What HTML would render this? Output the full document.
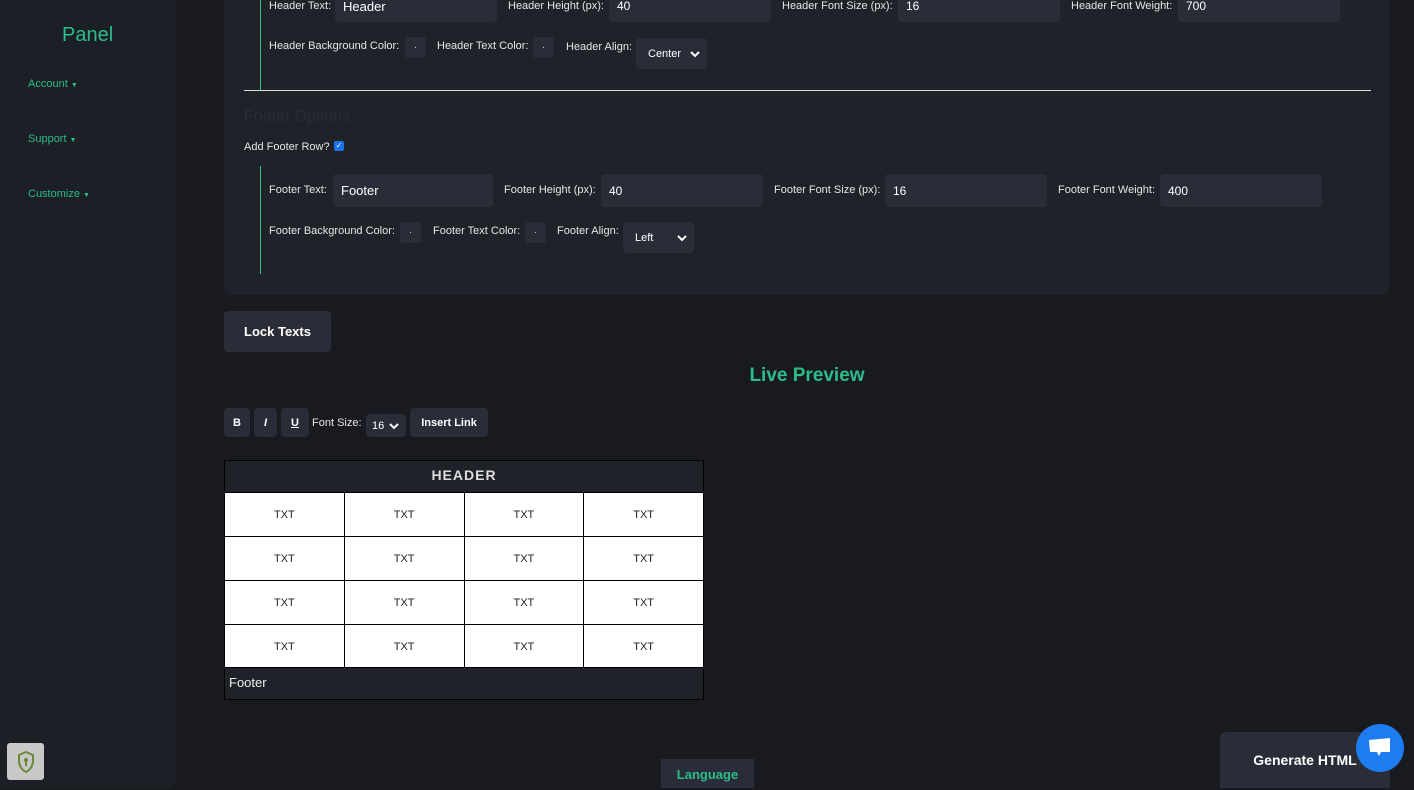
<!DOCTYPE html>
<html><head><meta charset="utf-8"><style>
*{margin:0;padding:0;box-sizing:border-box}
body{width:1414px;height:788px;background:#181a20;font-family:"Liberation Sans",sans-serif;color:#e6e6e6;position:relative;overflow:hidden}
.a{position:absolute}
.side{left:0;top:0;width:176px;height:788px;background:#1c1f26;border-radius:0 0 10px 0}
.g{color:#2bbd8a}
.nav{left:28px;font-size:11px;color:#2bbd8a}
.card{left:224px;top:-20px;width:1166px;height:315px;background:#1f2229;border-radius:8px}
.lbl{font-size:11px;color:#e6e6e6;white-space:nowrap}
.in{background:#2a2d38;border-radius:4px;font-size:12px;color:#fff;padding-left:8px;display:flex;align-items:center}
.sw{background:#2a2d38;border-radius:3px;width:21px;height:21px;font-size:10px;text-align:center;line-height:18px;color:#ccc}
.sel{background:#2a2d38;border-radius:4px;font-size:11px;color:#fff;display:flex;align-items:center;padding-left:12px;position:absolute}
.sel svg{position:absolute;right:7px;top:50%;margin-top:-4px}
.btn{background:#2a2d38;border-radius:4px;color:#fff;font-weight:bold;display:flex;align-items:center;justify-content:center}
table{border-collapse:collapse}
td{border:1px solid #000;background:#fff;color:#222;font-size:11px;text-align:center;width:120px;height:44px}
</style></head><body>
<div class="a side"></div>
<div class="a g" style="left:62px;top:24px;font-size:20px">Panel</div>
<div class="a nav" style="top:78px">Account <span style="font-size:7px">▼</span></div>
<div class="a nav" style="top:133px">Support <span style="font-size:7px">▼</span></div>
<div class="a nav" style="top:188px">Customize <span style="font-size:7px">▼</span></div>
<div class="a" style="left:7px;top:743px;width:37px;height:37px;background:#c8c8c8;border-radius:3px;display:flex;align-items:center;justify-content:center"><svg width="20" height="24" viewBox="0 0 20 24"><path d="M10 2L3 5v6c0 5 3 9 7 11 4-2 7-6 7-11V5z" fill="none" stroke="#6a8a3a" stroke-width="2"/><circle cx="10" cy="10" r="2" fill="#6a8a3a"/><path d="M10 11v5" stroke="#6a8a3a" stroke-width="2"/></svg></div>

<div class="a card"></div>
<div class="a" style="left:260px;top:0;width:1px;height:90px;background:#2bbd8a"></div>
<div class="a" style="left:260px;top:166px;width:1px;height:108px;background:#2bbd8a"></div>
<div class="a" style="left:244px;top:90px;width:1127px;height:1px;background:#ddd"></div>

<div class="a lbl" style="left:269px;top:0">Header Text:</div>
<div class="a in" style="left:335px;top:-10px;width:162px;height:32px;font-size:13px">Header</div>
<div class="a lbl" style="left:508px;top:0">Header Height (px):</div>
<div class="a in" style="left:609px;top:-10px;width:162px;height:32px">40</div>
<div class="a lbl" style="left:782px;top:0">Header Font Size (px):</div>
<div class="a in" style="left:898px;top:-10px;width:162px;height:32px">16</div>
<div class="a lbl" style="left:1071px;top:0">Header Font Weight:</div>
<div class="a in" style="left:1178px;top:-10px;width:162px;height:32px">700</div>

<div class="a lbl" style="left:269px;top:40px">Header Background Color:</div>
<div class="a sw" style="left:405px;top:37px">.</div>
<div class="a lbl" style="left:437px;top:40px">Header Text Color:</div>
<div class="a sw" style="left:533px;top:37px">.</div>
<div class="a lbl" style="left:566px;top:41px">Header Align:</div>
<div class="sel" style="left:636px;top:38px;width:71px;height:31px">Center<svg width="10" height="8" viewBox="0 0 10 8"><path d="M1 2l4 4 4-4" fill="none" stroke="#fff" stroke-width="2"/></svg></div>

<div class="a" style="left:244px;top:108px;font-size:16px;color:#2a2d35">Footer Options</div>
<div class="a lbl" style="left:244px;top:141px">Add Footer Row?</div>
<div class="a" style="left:334px;top:141px;width:10px;height:10px;background:#1a73e8;border-radius:2px;color:#fff;font-size:8px;line-height:10px;text-align:center">✓</div>

<div class="a lbl" style="left:269px;top:184px">Footer Text:</div>
<div class="a in" style="left:333px;top:174px;width:160px;height:33px;font-size:13px">Footer</div>
<div class="a lbl" style="left:504px;top:184px">Footer Height (px):</div>
<div class="a in" style="left:601px;top:174px;width:162px;height:33px">40</div>
<div class="a lbl" style="left:774px;top:184px">Footer Font Size (px):</div>
<div class="a in" style="left:885px;top:174px;width:162px;height:33px">16</div>
<div class="a lbl" style="left:1058px;top:184px">Footer Font Weight:</div>
<div class="a in" style="left:1160px;top:174px;width:162px;height:33px">400</div>

<div class="a lbl" style="left:269px;top:225px">Footer Background Color:</div>
<div class="a sw" style="left:400px;top:222px">.</div>
<div class="a lbl" style="left:433px;top:225px">Footer Text Color:</div>
<div class="a sw" style="left:525px;top:222px">.</div>
<div class="a lbl" style="left:557px;top:225px">Footer Align:</div>
<div class="sel" style="left:623px;top:222px;width:71px;height:31px">Left<svg width="10" height="8" viewBox="0 0 10 8"><path d="M1 2l4 4 4-4" fill="none" stroke="#fff" stroke-width="2"/></svg></div>

<div class="a btn" style="left:224px;top:311px;width:107px;height:41px;font-size:13px">Lock Texts</div>
<div class="a g" style="left:0;width:1614px;top:365px;text-align:center;font-size:19px;font-weight:bold">Live Preview</div>

<div class="a btn" style="left:224px;top:408px;width:26px;height:29px;font-size:11px">B</div>
<div class="a btn" style="left:254px;top:408px;width:23px;height:29px;font-size:11px;font-style:italic">I</div>
<div class="a btn" style="left:281px;top:408px;width:28px;height:29px;font-size:11px;text-decoration:underline">U</div>
<div class="a lbl" style="left:312px;top:417px">Font Size:</div>
<div class="sel" style="left:366px;top:414px;width:40px;height:23px;padding-left:6px">16<svg width="10" height="8" viewBox="0 0 10 8"><path d="M1 2l4 4 4-4" fill="none" stroke="#fff" stroke-width="2"/></svg></div>
<div class="a btn" style="left:410px;top:408px;width:78px;height:29px;font-size:11px">Insert Link</div>

<div class="a" style="left:224px;top:460px;width:480px;height:33px;background:#1f2229;border:1px solid #000;text-align:center;line-height:29px;font-weight:bold;font-size:14px;letter-spacing:1px;color:#ddd">HEADER</div>
<table class="a" style="left:224px;top:492px;width:480px">
<tr><td>TXT</td><td>TXT</td><td>TXT</td><td>TXT</td></tr>
<tr><td>TXT</td><td>TXT</td><td>TXT</td><td>TXT</td></tr>
<tr><td>TXT</td><td>TXT</td><td>TXT</td><td>TXT</td></tr>
<tr><td>TXT</td><td>TXT</td><td>TXT</td><td>TXT</td></tr>
</table>
<div class="a" style="left:224px;top:667px;width:480px;height:33px;background:#1f2229;border:1px solid #000;font-size:13px;padding:7px 0 0 4px;color:#eee">Footer</div>

<div class="a" style="left:661px;top:759px;width:93px;height:29px;background:#2a2d38;color:#2bbd8a;font-size:13px;font-weight:bold;text-align:center;line-height:31px">Language</div>
<div class="a btn" style="left:1220px;top:732px;width:170px;height:56px;font-size:14px;border-radius:6px 6px 0 0">Generate HTML</div>
<div class="a" style="left:1356px;top:724px;width:48px;height:48px;border-radius:50%;background:#1f7cf0;display:flex;align-items:center;justify-content:center"><svg width="24" height="22" viewBox="0 0 24 22"><path d="M1 3L22 1v14H13l-2 4-2-4H2z" fill="#fff"/></svg></div>
</body></html>
